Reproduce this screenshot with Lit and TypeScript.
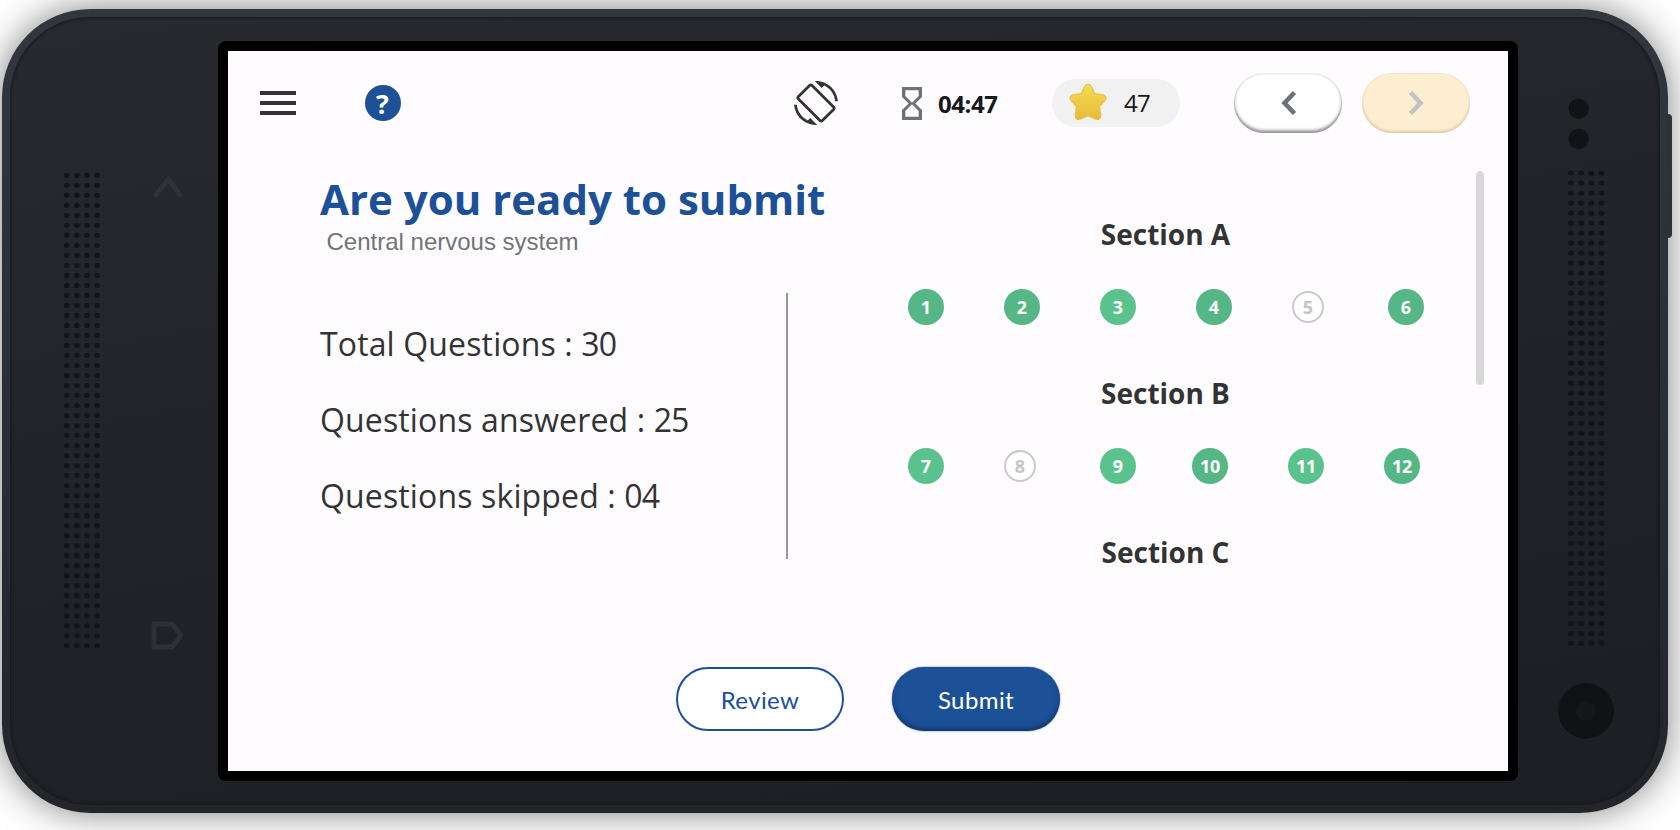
import { LitElement, html, css, svg } from "lit";
import { customElement } from "lit/decorators.js";
import { classMap } from "lit/directives/class-map.js";

type Question = { n: number; state: "done" | "light" | "skipped" };
type Section = { name: string; questions: Question[] };

const SECTIONS: Section[] = [
  {
    name: "Section A",
    questions: [
      { n: 1, state: "done" },
      { n: 2, state: "done" },
      { n: 3, state: "light" },
      { n: 4, state: "done" },
      { n: 5, state: "skipped" },
      { n: 6, state: "done" },
    ],
  },
  {
    name: "Section B",
    questions: [
      { n: 7, state: "light" },
      { n: 8, state: "skipped" },
      { n: 9, state: "light" },
      { n: 10, state: "done" },
      { n: 11, state: "light" },
      { n: 12, state: "done" },
    ],
  },
  { name: "Section C", questions: [] },
];

const STATS = [
  ["Total Questions", "30"],
  ["Questions answered", "25"],
  ["Questions skipped", "04"],
];

@customElement("question-dot")
class QuestionDot extends LitElement {
  static properties = { number: { type: Number }, state: { type: String } };
  static styles = css`
    :host { display: block; }
    .dot {
      box-sizing: border-box;
      width: 36px;
      height: 36px;
      border-radius: 50%;
      background: #54b785;
      color: #fff;
      font: 700 18px/37px "Open Sans", sans-serif;
      text-align: center;
    }
    .light { background: #5ac38d; }
    .two { margin-left: -4px; letter-spacing: -0.4px; }
    .skipped {
      width: 32px;
      height: 32px;
      border: 2px solid #c9c9c9;
      background: #fff;
      color: #c4c4c4;
      line-height: 28px;
    }
  `;
  declare number: number;
  declare state: string;
  render() {
    const classes = {
      dot: true,
      light: this.state === "light",
      skipped: this.state === "skipped",
      two: this.number > 9,
    };
    return html`<div class=${classMap(classes)}>${this.number}</div>`;
  }
}

@customElement("app-root")
class AppRoot extends LitElement {
  static styles = css`
    :host {
      display: block;
      width: 1680px;
      height: 830px;
      overflow: hidden;
      background: #fff;
      font-family: "Open Sans", sans-serif;
      color: #333;
    }
    * { box-sizing: border-box; }
    .stage { position: relative; padding: 9px 0 0 2px; height: 830px; }
    .power {
      position: absolute;
      left: 1667px;
      top: 114px;
      width: 5px;
      height: 124px;
      border-radius: 0 4px 4px 0;
      background: #2e3138;
    }
    .device {
      position: relative;
      width: 1666px;
      height: 804px;
      border-radius: 88px;
      padding: 8px;
      background: linear-gradient(#32363d, #2b2f37 45%, #24252b);
      box-shadow: 0 0 36px rgba(0, 0, 0, 0.5);
    }
    .body {
      display: grid;
      grid-template-columns: 208px 1300px 1fr;
      height: 788px;
      border-radius: 80px;
      background: linear-gradient(170deg, #292a2f, #212328 50%, #1d1e23);
      box-shadow: inset 0 0 3px 1px #17181c;
    }
    .side { display: block; width: 100%; height: 788px; }
    .bezel {
      margin-top: 24px;
      width: 1300px;
      height: 740px;
      padding: 10px;
      border-radius: 8px;
      background: #000;
    }
    .screen {
      display: flex;
      flex-direction: column;
      height: 720px;
      background: #fefcff;
    }
    .bar {
      display: flex;
      align-items: center;
      height: 104px;
      padding: 0 38px 0 32px;
    }
    .menu { display: grid; gap: 6px; width: 36px; }
    .menu span { height: 4px; background: #333; }
    .help {
      width: 36px;
      height: 36px;
      margin-left: 68.5px;
      border-radius: 50%;
      background: #1c5097;
      color: #fff;
      font-size: 27px;
      font-weight: 700;
      line-height: 37px;
      text-align: center;
    }
    .rotate { width: 44px; height: 44px; margin-left: 393.5px; }
    .glass { width: 20px; height: 33px; margin-left: 63.5px; }
    .time {
      margin-left: 16.5px;
      width: 62px;
      font-size: 24px;
      font-weight: 700;
      line-height: 32px;
      letter-spacing: -0.45px;
      color: #17181a;
      padding-top: 2px;
    }
    .score {
      display: flex;
      align-items: center;
      width: 128px;
      height: 48px;
      margin-left: 52px;
      padding-left: 16px;
      border-radius: 24px;
      background: #f1f1f1;
      font-size: 24px;
      letter-spacing: -0.8px;
      color: #17181a;
    }
    .star { width: 40px; height: 40px; margin-top: -3px; }
    .score span { margin-left: 16px; line-height: 32px; }
    .nav {
      display: grid;
      place-items: center;
      width: 108px;
      height: 60px;
      border-radius: 30px;
    }
    .prev {
      margin-left: 54px;
      background: #fff;
      box-shadow: inset 0 -3px 3px rgba(0, 0, 0, 0.36), inset 0 0 3px rgba(0, 0, 0, 0.25);
    }
    .next {
      margin-left: 20px;
      background: #fdeed1;
      box-shadow: inset 0 -2px 3px rgba(120, 90, 20, 0.22), inset 0 0 2px rgba(120, 100, 50, 0.15);
    }
    .nav svg { width: 16px; height: 26px; }
    .prev svg { margin-left: 2px; }
    .main { display: flex; height: 436px; }
    .summary { width: 558px; padding: 15px 0 0 92px; }
    h1 {
      margin: 0;
      font-size: 42px;
      line-height: 58px;
      font-weight: 700;
      color: #1c5097;
      white-space: nowrap;
    }
    .topic {
      padding-left: 6.5px;
      font: 24px/28px "Liberation Sans", sans-serif;
      color: #717478;
    }
    .stats {
      display: grid;
      gap: 32px;
      margin-top: 66px;
      font-size: 32px;
      line-height: 44px;
      letter-spacing: 0.14px;
    }
    .count { letter-spacing: -0.9px; }
    .divider { width: 2px; height: 266px; margin-top: 138px; background: #9a9a9d; }
    .sections { width: 688px; padding: 60px 0 0 120px; }
    .section { height: 159px; }
    h2 {
      margin: 0;
      width: 515px;
      font-size: 28px;
      line-height: 39px;
      font-weight: 700;
      text-align: center;
    }
    .row {
      display: grid;
      grid-template-columns: repeat(6, 96px);
      align-items: center;
      height: 36px;
      margin-top: 35px;
    }
    .scroll { width: 8px; height: 214px; margin-top: 16px; border-radius: 4px; background: #d8d8d8; }
    .actions { display: flex; gap: 48px; padding: 76px 0 0 448px; }
    .btn {
      width: 168px;
      height: 64px;
      border: 2px solid #1c5097;
      border-radius: 32px;
      background: #fff;
      color: #1c5097;
      font: 24px/61px Lato, sans-serif;
      letter-spacing: 0.4px;
      text-align: center;
      padding: 0;
    }
    .primary {
      border: 0;
      background: #1c5097;
      color: #fff;
      line-height: 65px;
      box-shadow: inset 0 -3px 4px rgba(0, 0, 0, 0.3), 0 0 2px rgba(28, 60, 110, 0.7);
    }
  `;

  /* Perforated speaker grille: 4 x 48 holes on a 10px pitch. */
  private grille(x: number, y: number, rx: number) {
    const holes = [];
    for (let r = 0; r < 48; r++)
      for (let c = 0; c < 4; c++)
        holes.push(svg`<ellipse cx=${x + c * 10.15} cy=${y + r * 10.01} rx=${rx} ry="2.6"/>`);
    return svg`<g fill="#131418">${holes}</g>`;
  }

  render() {
    return html`
      <div class="stage">
        <div class="device">
          <div class="body">
            <svg class="side" viewBox="10 17 208 788">
              ${this.grille(66.7, 175.3, 2.8)}
              <path d="M154.5 197L168.3 179L181.5 197" fill="none" stroke="#303338" stroke-width="4.8"/>
              <path d="M154 624H172L181 635.5L172 647H154Z" fill="none" stroke="#2d3035" stroke-width="4.8"/>
            </svg>
            <div class="bezel">
              <div class="screen">
                <div class="bar">
                  <div class="menu"><span></span><span></span><span></span></div>
                  <div class="help">?</div>
                  <svg class="rotate" viewBox="0 0 24 24" fill="#333">
                    <path d="M16.48 2.52c3.27 1.55 5.61 4.72 5.97 8.48h1.5C23.44 4.84 18.29 0 12 0l-.66.03 3.81 3.81 1.33-1.32zm-6.25-.77c-.59-.59-1.54-.59-2.12 0L1.75 8.11c-.59.59-.59 1.54 0 2.12l12.02 12.02c.59.59 1.54.59 2.12 0l6.36-6.36c.59-.59.59-1.54 0-2.12L10.23 1.75zm4.6 19.44L2.81 9.17l6.36-6.36 12.02 12.02-6.36 6.36zm-7.31.29C4.25 19.94 1.91 16.76 1.55 13H.05C.56 19.16 5.71 24 12 24l.66-.03-3.81-3.81-1.33 1.32z"/>
                  </svg>
                  <svg class="glass" viewBox="6 2 12 20" preserveAspectRatio="none" fill="#6f7278">
                    <path d="M6 2v6h.01L6 8.01 10 12l-4 4 .01.01H6V22h12v-5.99h-.01L18 16l-4-4 4-3.99-.01-.01H18V2H6zm10 14.5V20H8v-3.5l4-4 4 4zm-4-5l-4-4V4h8v3.5l-4 4z"/>
                  </svg>
                  <div class="time">04:47</div>
                  <div class="score">
                    <svg class="star" viewBox="0 0 40 40">
                      <defs>
                        <linearGradient id="gold" x1="0" y1="0" x2="0" y2="1">
                          <stop offset="0" stop-color="#f6de49"/>
                          <stop offset="1" stop-color="#e7b93f"/>
                        </linearGradient>
                      </defs>
                      <path d="M16.6 4.5Q20 -.5 23.4 4.5L26.6 11.5L34 12.6Q40 14 37 18.5L31.6 24.3L32.8 33Q32.5 38.8 27 37L20 33.8L13 37Q7.5 38.8 7.2 33L8.4 24.3L3 18.5Q0 14 6 12.6L13.4 11.5Z" fill="url(#gold)" stroke="#e9c044" stroke-width="1.2"/>
                    </svg>
                    <span>47</span>
                  </div>
                  <div class="nav prev">
                    <svg viewBox="0 0 16 26"><path d="M13.5 2.5L3.5 13L13.5 23.5" fill="none" stroke="#6f7278" stroke-width="4.6"/></svg>
                  </div>
                  <div class="nav next">
                    <svg viewBox="0 0 16 26"><path d="M2.5 2.5L12.5 13L2.5 23.5" fill="none" stroke="#c3c3c6" stroke-width="4.6"/></svg>
                  </div>
                </div>
                <div class="main">
                  <div class="summary">
                    <h1>Are you ready to submit</h1>
                    <div class="topic">Central nervous system</div>
                    <div class="stats">
                      ${STATS.map(([label, count]) => html`<div>${label} : <span class="count">${count}</span></div>`)}
                    </div>
                  </div>
                  <div class="divider"></div>
                  <div class="sections">
                    ${SECTIONS.map(
                      (s) => html`<div class="section">
                        <h2>${s.name}</h2>
                        <div class="row">
                          ${s.questions.map(
                            (q) => html`<question-dot .number=${q.n} .state=${q.state}></question-dot>`
                          )}
                        </div>
                      </div>`
                    )}
                  </div>
                  <div class="scroll"></div>
                </div>
                <div class="actions">
                  <button class="btn">Review</button>
                  <button class="btn primary">Submit</button>
                </div>
              </div>
            </div>
            <svg class="side" viewBox="1518 17 142 788">
              <circle cx="1578.7" cy="108.7" r="10.2" fill="#121317"/>
              <circle cx="1578.7" cy="139" r="10.2" fill="#121317"/>
              ${this.grille(1571, 173, 3)}
              <circle cx="1586" cy="711.5" r="28.5" fill="#22242a"/>
              <circle cx="1586" cy="711" r="28" fill="#111216"/>
              <circle cx="1586" cy="711" r="10" fill="#16171b"/>
            </svg>
          </div>
        </div>
        <div class="power"></div>
      </div>
    `;
  }
}
